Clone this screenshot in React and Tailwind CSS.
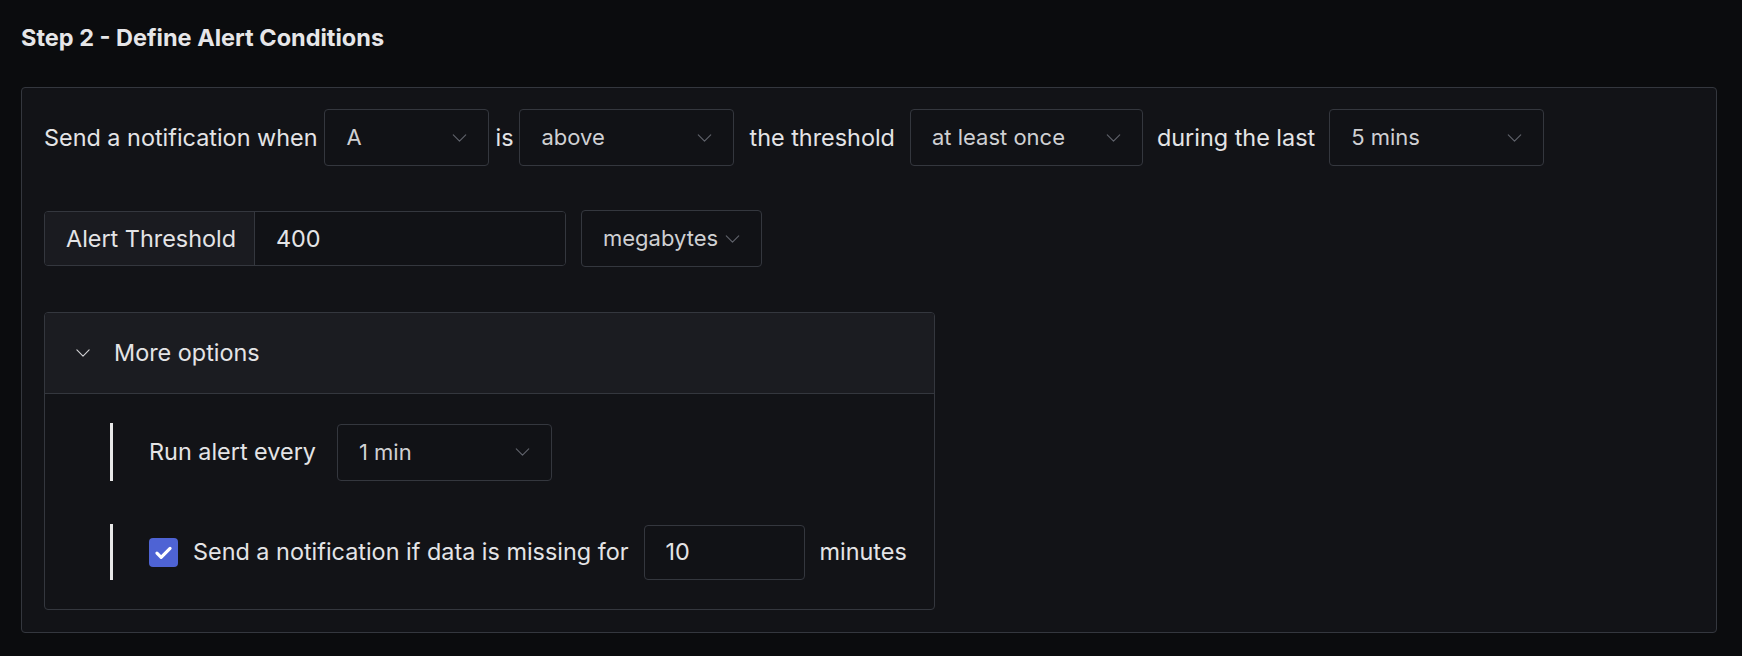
import React from "react";

function Chevron({ className = "" }) {
  return (
    <svg viewBox="0 0 16 9" className={className} fill="none" stroke="currentColor" strokeWidth="1.3" strokeLinecap="round" strokeLinejoin="round">
      <path d="M1 1l7 7 7-7" />
    </svg>
  );
}

function Select({ value, width, height = "h-[57px]" }) {
  return (
    <div className={`${width} ${height} flex items-center justify-between pl-[21px] pr-[21px] border border-[#34373e] rounded-[4px] bg-[#111216] flex-shrink-0`}>
      <span className="text-[22px] text-[#cfd0d3]">{value}</span>
      <Chevron className="w-[15px] h-[8px] text-[#5f626a]" />
    </div>
  );
}

export default function App() {
  return (
    <div className="min-h-screen bg-[#0b0c0e] pl-[21px] pr-[25px] pt-[24px] font-['Inter',sans-serif] text-[23.4px] text-[#e4e4e6]">
      <h2 className="text-[23.5px] leading-[28px] font-bold text-[#e6e6e8] mb-[35px]">Step 2 - Define Alert Conditions</h2>

      <div className="border border-[#34373e] rounded-[4px] bg-[#121317] px-[22px] pt-[21px] pb-[22px]">
        <div className="flex items-center h-[57px]">
          <span className="mr-[7px]">Send a notification when</span>
          <Select value="A" width="w-[165px]" />
          <span className="mx-[6px]">is</span>
          <Select value="above" width="w-[215px]" />
          <span className="mx-[15px]">the threshold</span>
          <Select value="at least once" width="w-[233px]" />
          <span className="mx-[14px]">during the last</span>
          <Select value="5 mins" width="w-[215px]" />
        </div>

        <div className="flex items-center mt-[44px]">
          <div className="flex h-[55px] w-[522px] border border-[#34373e] rounded-[4px] overflow-hidden">
            <div className="w-[210px] flex items-center pl-[21px] bg-[#1a1b20] border-r border-[#34373e]">Alert Threshold</div>
            <div className="flex-1 flex items-center pl-[21px] bg-[#111216]">400</div>
          </div>
          <div className="ml-[15px]">
            <Select value="megabytes" width="w-[181px]" />
          </div>
        </div>

        <div className="mt-[45px] w-[891px] border border-[#34373e] rounded-[4px] overflow-hidden">
          <div className="h-[81px] flex items-center pl-[31px] bg-[#1b1c21] border-b border-[#34373e]">
            <Chevron className="w-[14px] h-[8px] text-[#d0d0d3]" />
            <span className="ml-[24px]">More options</span>
          </div>
          <div className="pl-[65px] pt-[29px] pb-[29px]">
            <div className="flex items-center h-[58px] border-l-[3px] border-[#e8e8e8] pl-[36px]">
              <span>Run alert every</span>
              <div className="ml-[21px]">
                <Select value="1 min" width="w-[215px]" />
              </div>
            </div>
            <div className="flex items-center h-[56px] mt-[43px] border-l-[3px] border-[#e8e8e8] pl-[36px]">
              <div className="w-[29px] h-[29px] rounded-[4px] bg-[#4e63d4] flex items-center justify-center flex-shrink-0">
                <svg viewBox="0 0 16 16" className="w-[21px] h-[21px]" fill="none" stroke="#ffffff" strokeWidth="2.4" strokeLinecap="round" strokeLinejoin="round">
                  <path d="M3 8.5l3.2 3.2L13 4.8" />
                </svg>
              </div>
              <span className="ml-[15px]">Send a notification if data is missing for</span>
              <div className="ml-[15px] w-[161px] h-[55px] flex items-center pl-[21px] border border-[#34373e] rounded-[4px] bg-[#111216]">10</div>
              <span className="ml-[15px]">minutes</span>
            </div>
          </div>
        </div>
      </div>
    </div>
  );
}
